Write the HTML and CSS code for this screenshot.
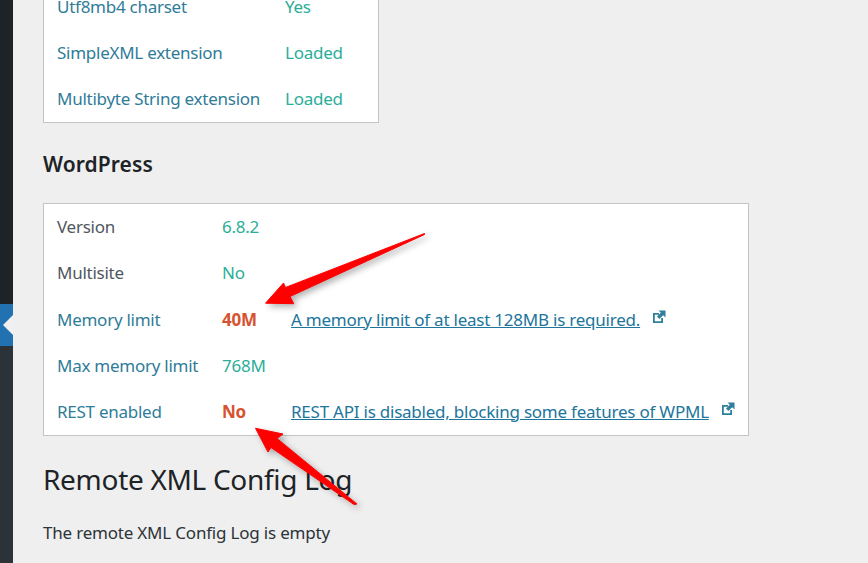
FILE: index.html
```html
<!DOCTYPE html>
<html lang="en">
<head>
    <meta charset="UTF-8">
    <title>Support</title>
    <link rel="stylesheet" href="styles.css">
</head>
<body>
    <div class="sidebar">
        <div class="sidebar-top"></div>
        <div class="sidebar-toggle"><span class="toggle-arrow"></span></div>
        <div class="sidebar-bottom"></div>
    </div>

    <main class="content">
        <div class="panel panel-small">
            <div class="row"><span class="label">Utf8mb4 charset</span><span class="value">Yes</span></div>
            <div class="row"><span class="label">SimpleXML extension</span><span class="value">Loaded</span></div>
            <div class="row"><span class="label">Multibyte String extension</span><span class="value">Loaded</span></div>
        </div>

        <h3>WordPress</h3>

        <div class="panel panel-wide">
            <div class="row"><span class="label label-dark">Version</span><span class="value">6.8.2</span></div>
            <div class="row"><span class="label label-dark">Multisite</span><span class="value">No</span></div>
            <div class="row">
                <span class="label">Memory limit</span><span class="value error">40M</span>
                <a class="note" href="#">A memory limit of at least 128MB is required.</a>
                <svg class="ext" viewBox="0 0 14 14"><path d="M1 3h6v1.800H2.800v6.400h6.400V8H11v5H1z"/><path d="M6.500 0.500H13.500V7.500L11.200 5.200 7.400 9 5 6.600 8.800 2.800z"/></svg>
            </div>
            <div class="row"><span class="label">Max memory limit</span><span class="value">768M</span></div>
            <div class="row">
                <span class="label">REST enabled</span><span class="value error">No</span>
                <a class="note" href="#">REST API is disabled, blocking some features of WPML</a>
                <svg class="ext" viewBox="0 0 14 14"><path d="M1 3h6v1.800H2.800v6.400h6.400V8H11v5H1z"/><path d="M6.500 0.500H13.500V7.500L11.200 5.200 7.400 9 5 6.600 8.800 2.800z"/></svg>
            </div>
        </div>

        <h2>Remote XML Config Log</h2>
        <p>The remote XML Config Log is empty</p>
    </main>

    <!-- arrows drawn over the screenshot -->
    <svg class="arrows" viewBox="0 0 868 563">
        <polygon points="424.500,233.500 285.500,287.500 283.500,283 265.500,303.200 293.800,303.700 290,296.500 424.500,234.500"/>
        <polygon points="255.500,428.300 283,434 277,438.500 357,504 354,504.500 271,447.500 268,452"/>
    </svg>
</body>
</html>
```

FILE: styles.css
```css
body {
    margin: 0;
    height: 563px;
    overflow: hidden;
    display: flex;
    background-color: #efefef;
    font-family: "Noto Sans", sans-serif;
    font-size: 17px;
    letter-spacing: -0.26px;
    color: #2c3338;
}
.sidebar {
    width: 13px;
    flex-shrink: 0;
    display: flex;
    flex-direction: column;
}
.sidebar-top {
    height: 304px;
    background: #1d2327;
}
.sidebar-toggle {
    height: 42px;
    background: #2271b1;
    display: flex;
    align-items: center;
}
.toggle-arrow {
    margin-left: 3px;
    border-top: 10px solid transparent;
    border-bottom: 10px solid transparent;
    border-right: 10px solid #f0f0f0;
}
.sidebar-bottom {
    flex: 1;
    background: #2c3338;
}
.content {
    margin-top: -18px;
    margin-left: 30px;
    flex: 1;
}
.panel {
    background: white;
    border: 1px solid #c3c4c7;
    padding-left: 13px;
}
.panel-small {
    width: 321px;
}
.panel-wide {
    width: 691px;
}
.row {
    height: 46.2px;
    display: flex;
    align-items: center;
    white-space: nowrap;
}
.label {
    width: 165px;
    color: #2f7c98;
}
.label-dark {
    color: #50575e;
}
.panel-small .label {
    width: 228px;
}
.value {
    width: 69px;
    color: #2bae98;
}
.error {
    color: #d6532f;
    font-weight: bold;
}
.note {
    color: #21759b;
    letter-spacing: -0.23px;
}
.ext {
    width: 14px;
    height: 14px;
    margin-left: 12px;
    margin-top: -5px;
    fill: #2f7f9f;
}
h3 {
    margin: 27px 0 25px;
    font-size: 21px;
    line-height: 28px;
    font-weight: 600;
    letter-spacing: 0.1px;
    color: #1d2327;
}
h2 {
    margin: 23px 0 21px;
    font-size: 28px;
    line-height: 40px;
    font-weight: 400;
    letter-spacing: -0.3px;
    color: #1d2327;
}
p {
    margin: 0;
    line-height: 26px;
    letter-spacing: -0.2px;
}
.arrows {
    position: absolute;
    left: 0;
    top: 0;
    width: 868px;
    height: 563px;
    fill: #ff0000;
    stroke: #ff0000;
    stroke-width: 1;
    stroke-linejoin: round;
    filter: drop-shadow(3px 3px 3px rgba(0, 0, 0, 0.3));
}
```
